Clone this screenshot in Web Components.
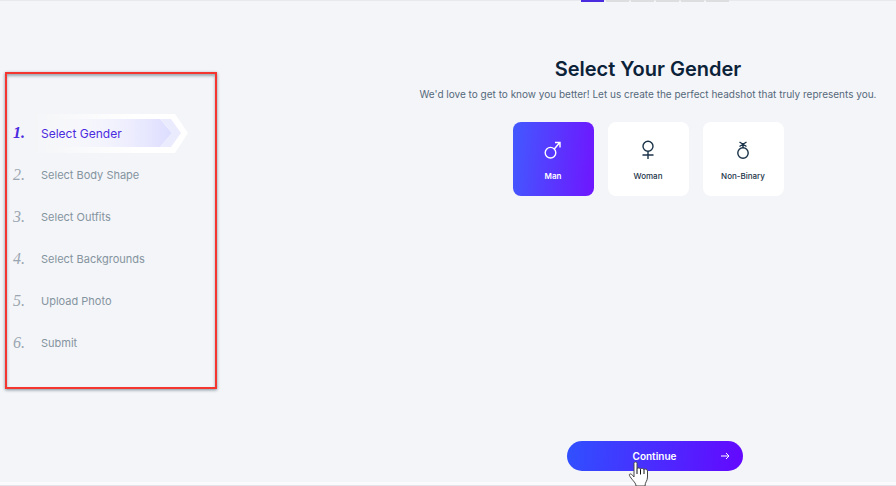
<!DOCTYPE html>
<html lang="en">
<head>
<meta charset="UTF-8">
<meta name="viewport" content="width=device-width, initial-scale=1.0">
<title>Select Your Gender</title>
<style>
  body {
    margin: 0;
    background: #f4f5f8;
    color: #0b2239;
    font-family: Inter, "Liberation Sans", sans-serif;
  }
</style>
</head>
<body>
<wizard-layout>
  <step-list slot="sidebar">
    <step-item number="1" active>Select Gender</step-item>
    <step-item number="2">Select Body Shape</step-item>
    <step-item number="3">Select Outfits</step-item>
    <step-item number="4">Select Backgrounds</step-item>
    <step-item number="5">Upload Photo</step-item>
    <step-item number="6">Submit</step-item>
  </step-list>
  <progress-bars total="6" current="1"></progress-bars>
  <page-heading>
    Select Your Gender
    <span slot="subtitle">We'd love to get to know you better! Let us create the perfect headshot that truly represents you.</span>
  </page-heading>
  <option-group label="Gender">
    <option-card icon="man" selected>Man</option-card>
    <option-card icon="woman">Woman</option-card>
    <option-card icon="nonbinary">Non-Binary</option-card>
  </option-group>
  <continue-button slot="footer">Continue</continue-button>
</wizard-layout>

<script>
const ICONS = {
  man: '<circle cx="7.500" cy="12.700" r="5.300"/><path d="M11.300 9l5.500-6.500M12 2.500h5v5"/>',
  woman: '<circle cx="10" cy="6.300" r="5"/><path d="M10 11.300V19M4.500 15h11"/>',
  nonbinary: '<circle cx="10" cy="13" r="5.200"/><path d="M10 8V4.500M6.500 2l7 4.500M13.500 2l-7 4.500"/>'
};

class WizardLayout extends HTMLElement {
  connectedCallback() {
    this.attachShadow({ mode: 'open' });
    this.shadowRoot.innerHTML = `
      <style>
        :host {
          display: grid;
          grid-template-columns: 400px 1fr;
          min-height: 100vh;
          box-sizing: border-box;
          border-top: 1px solid #e8e9ed;
          border-bottom: 1px solid #e2e2e8;
          box-shadow: inset 0 -3px #fbfbfe;
        }
        aside {
          padding: 71px 0 0 5px;
        }
        main {
          display: flex;
          flex-direction: column;
          align-items: center;
          min-width: 0;
        }
        footer {
          margin-top: auto;
          padding: 24px 0 14px;
        }
      </style>
      <aside><slot name="sidebar"></slot></aside>
      <main>
        <slot></slot>
        <footer><slot name="footer"></slot></footer>
      </main>
    `;
  }
}
customElements.define('wizard-layout', WizardLayout);

class StepList extends HTMLElement {
  connectedCallback() {
    this.attachShadow({ mode: 'open' });
    this.shadowRoot.innerHTML = `
      <style>
        :host {
          display: block;
          width: 212px;
          box-sizing: border-box;
          border: 2px solid #f5352f;
          box-shadow: 0 1px 3px #7a8f99, inset 0 2px 3px #9aa9b0;
          padding: 38px 0 23px 6px;
        }
      </style>
      <nav aria-label="Steps"><slot></slot></nav>
    `;
  }
}
customElements.define('step-list', StepList);

class StepItem extends HTMLElement {
  connectedCallback() {
    const active = this.hasAttribute('active');
    this.attachShadow({ mode: 'open' });
    this.shadowRoot.innerHTML = `
      <style>
        :host {
          display: grid;
          grid-template-columns: 28px 1fr;
          align-items: center;
          height: 42px;
          position: relative;
          color: #84949f;
          font-size: 11px;
        }
        :host([active]) {
          color: #4b2be0;
          font-size: 12px;
        }
        .number {
          font-family: "Liberation Serif", serif;
          font-style: italic;
          font-size: 16px;
          color: #9aa5b1;
          position: relative;
        }
        :host([active]) .number {
          color: #4b2be0;
          font-weight: bold;
        }
        .label {
          position: relative;
        }
        svg {
          position: absolute;
          left: 0;
          top: 0;
        }
      </style>
      ${active ? `
      <svg width="176" height="42" aria-hidden="true">
        <defs>
          <linearGradient id="edge">
            <stop offset="0.1" stop-color="#fff" stop-opacity="0"/>
            <stop offset="0.7" stop-color="#fff"/>
          </linearGradient>
          <linearGradient id="fill">
            <stop offset="0.15" stop-color="#f4f5fb" stop-opacity="0"/>
            <stop offset="1" stop-color="#dcdcff"/>
          </linearGradient>
        </defs>
        <path d="M0 2h162l13 19-13 20H0z" fill="url(#edge)"/>
        <path d="M10 7h137l12 14-12 14H10z" fill="url(#fill)"/>
        <path d="M147 7h11l10 14-10 14h-11l12-14z" fill="#ebebfe"/>
      </svg>` : ''}
      <span class="number">${this.getAttribute('number')}.</span>
      <span class="label"><slot></slot></span>
    `;
    if (active) this.setAttribute('aria-current', 'step');
  }
}
customElements.define('step-item', StepItem);

class ProgressBars extends HTMLElement {
  connectedCallback() {
    const total = Number(this.getAttribute('total'));
    const current = Number(this.getAttribute('current'));
    let bars = '';
    for (let i = 1; i <= total; i++) {
      bars += `<span class="${i <= current ? 'done' : ''}"></span>`;
    }
    this.attachShadow({ mode: 'open' });
    this.shadowRoot.innerHTML = `
      <style>
        :host {
          display: flex;
          gap: 2px;
          margin: -1px 0 55px 14px;
        }
        span {
          width: 23px;
          height: 2px;
          background: #dcdee0;
        }
        .done {
          background: #4b2be0;
        }
      </style>
      ${bars}
    `;
  }
}
customElements.define('progress-bars', ProgressBars);

class PageHeading extends HTMLElement {
  connectedCallback() {
    this.attachShadow({ mode: 'open' });
    this.shadowRoot.innerHTML = `
      <style>
        :host {
          display: block;
          text-align: center;
        }
        h1 {
          margin: 0;
          font-size: 20px;
          line-height: 24px;
          font-weight: 600;
        }
        p {
          margin: 6px 0 0;
          font-size: 10px;
          line-height: 14px;
          color: #55697b;
        }
      </style>
      <h1><slot></slot></h1>
      <p><slot name="subtitle"></slot></p>
    `;
  }
}
customElements.define('page-heading', PageHeading);

class OptionGroup extends HTMLElement {
  connectedCallback() {
    this.attachShadow({ mode: 'open' });
    this.shadowRoot.innerHTML = `
      <style>
        :host {
          display: block;
          margin-top: 21px;
        }
        div {
          display: flex;
          gap: 14px;
        }
      </style>
      <div role="group" aria-label="${this.getAttribute('label')}"><slot></slot></div>
    `;
    this.addEventListener('click', (e) => {
      const card = e.target.closest('option-card');
      if (!card) return;
      this.querySelectorAll('option-card').forEach((c) => c.toggleAttribute('selected', c === card));
    });
  }
}
customElements.define('option-group', OptionGroup);

class OptionCard extends HTMLElement {
  static get observedAttributes() {
    return ['selected'];
  }
  connectedCallback() {
    this.attachShadow({ mode: 'open' });
    this.shadowRoot.innerHTML = `
      <style>
        :host {
          display: block;
        }
        button {
          display: flex;
          flex-direction: column;
          align-items: center;
          gap: 9px;
          width: 81px;
          height: 74px;
          padding: 18px 0 0;
          border: 0;
          border-radius: 8px;
          background: #fff;
          color: #1b3349;
          font: 500 8px/14px Inter, "Liberation Sans", sans-serif;
          cursor: pointer;
        }
        :host([selected]) button {
          background: linear-gradient(95deg, #4259ff, #6f16ff);
          color: #fff;
          font-weight: 600;
        }
        svg {
          fill: none;
          stroke: currentColor;
          stroke-width: 1.4;
        }
      </style>
      <button type="button">
        <svg width="20" height="20" viewBox="0 0 20 20" aria-hidden="true">${ICONS[this.getAttribute('icon')]}</svg>
        <span><slot></slot></span>
      </button>
    `;
    this.update();
  }
  attributeChangedCallback() {
    this.update();
  }
  update() {
    if (!this.shadowRoot) return;
    this.shadowRoot.querySelector('button').setAttribute('aria-pressed', this.hasAttribute('selected'));
  }
}
customElements.define('option-card', OptionCard);

class ContinueButton extends HTMLElement {
  connectedCallback() {
    this.attachShadow({ mode: 'open' });
    this.shadowRoot.innerHTML = `
      <style>
        :host {
          display: block;
          position: relative;
          margin-left: 13px;
        }
        button {
          display: grid;
          grid-template-columns: 1fr auto 1fr;
          align-items: center;
          width: 176px;
          height: 30px;
          padding: 0 13px;
          border: 0;
          border-radius: 15px;
          background: linear-gradient(95deg, #3050ff, #6408ff);
          color: #fff;
          font: 600 10px/14px Inter, "Liberation Sans", sans-serif;
          cursor: pointer;
        }
        .label {
          grid-column: 2;
        }
        .arrow {
          justify-self: end;
        }
        .cursor {
          position: absolute;
          left: 61px;
          top: 20px;
        }
      </style>
      <button type="button">
        <span class="label"><slot></slot></span>
        <svg class="arrow" width="10" height="10" viewBox="0 0 10 10" fill="none" stroke="currentColor" aria-hidden="true">
          <path d="M1 5h8M6 2l3 3-3 3"/>
        </svg>
      </button>
      <svg class="cursor" width="22" height="25" viewBox="0 0 22 25" aria-hidden="true">
        <path d="M6 16V2.500c0-2 3-2 3 0V8c0-1.500 3.500-1.500 3.500 .5 0-1.500 3.500-1.500 3.500 .5 0-1.500 3.500-1.500 3.500 1v6c0 4-2.500 5-2.500 9H8c0-3-3-5-6-9.500-2-3 1-4 4 .5z" fill="#fff" stroke="#444" stroke-linejoin="round"/>
        <path d="M9 8v5M12.500 8.500v5M16 9v4" stroke="#111" fill="none"/>
      </svg>
    `;
  }
}
customElements.define('continue-button', ContinueButton);
</script>
</body>
</html>
